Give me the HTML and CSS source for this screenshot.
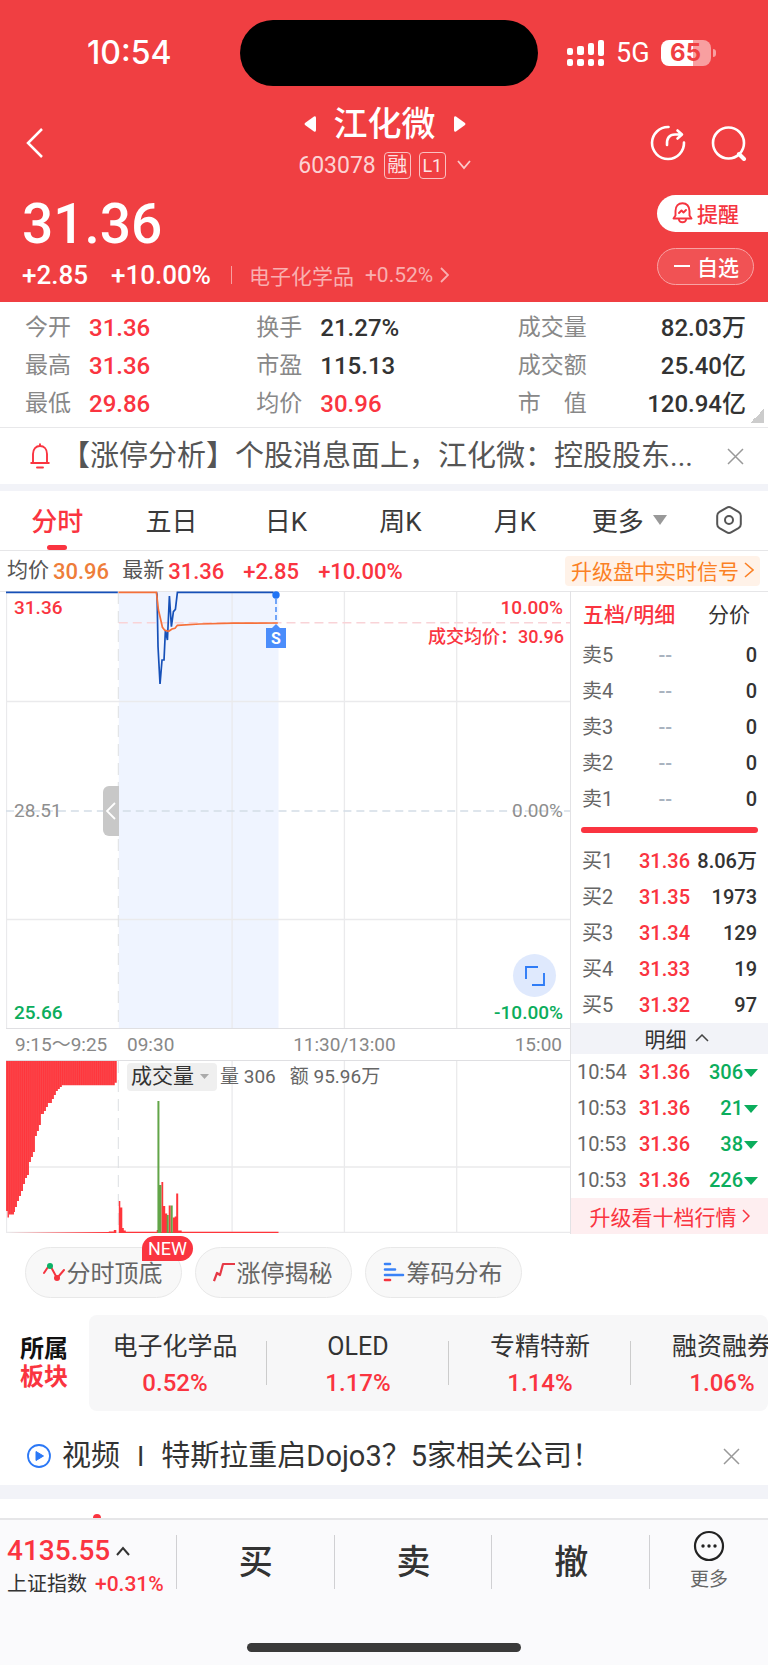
FILE: index.html
```html
<!DOCTYPE html>
<html lang="zh-CN">
<head>
<meta charset="utf-8">
<meta name="viewport" content="width=device-width, initial-scale=1">
<title>江化微 603078</title>
<link rel="stylesheet" href="styles.css">
</head>
<body>
<header class="hero">
  <div class="status">
    <span class="clock">10:54</span>
    <span class="island"></span>
    <div class="signals">
      <svg class="bars" width="38" height="26" viewBox="0 0 38 26" fill="#fff" aria-hidden="true">
        <rect x="0" y="8" width="6" height="7" rx="2"/><rect x="10" y="6" width="7" height="9" rx="2"/><rect x="21" y="3" width="6" height="12" rx="2"/><rect x="31" y="0" width="6" height="16" rx="2"/>
        <rect x="0" y="19" width="6" height="7" rx="2"/><rect x="10" y="19" width="7" height="7" rx="2"/><rect x="21" y="19" width="6" height="7" rx="2"/><rect x="31" y="19" width="6" height="7" rx="2"/>
      </svg>
      <span class="net">5G</span>
      <span class="battery">65</span>
      <span class="nub"></span>
    </div>
  </div>

  <div class="titlebar">
    <button class="icon-btn back" aria-label="返回"><svg width="20" height="32" viewBox="0 0 20 32" fill="none" stroke="#fff" stroke-width="2.5"><path d="M18 2 4 16l14 14"/></svg></button>
    <div class="title">
      <div class="title-row">
        <button class="icon-btn" aria-label="上一只"><svg width="12" height="18" viewBox="0 0 12 18" fill="#fff"><path d="M10 1.500Q12 .5 12 3v12q0 2.500-2 1.500L1 10q-1-1 0-2z"/></svg></button>
        <h1>江化微</h1>
        <button class="icon-btn" aria-label="下一只"><svg width="12" height="18" viewBox="0 0 12 18" fill="#fff"><path d="M2 1.500Q0 .5 0 3v12q0 2.500 2 1.500L11 10q1-1 0-2z"/></svg></button>
      </div>
      <div class="code-row">
        <span class="code">603078</span><span class="badge">融</span><span class="badge level">L1</span>
        <svg width="14" height="10" viewBox="0 0 14 10" fill="none" stroke="#fbc9ca" stroke-width="1.800"><path d="m1 1 6 7 6-7"/></svg>
      </div>
    </div>
    <div class="tools">
      <button class="icon-btn" aria-label="分享"><svg width="36" height="36" viewBox="0 0 36 36" fill="none" stroke="#fff" stroke-width="2.600" stroke-linecap="round" stroke-linejoin="round"><path d="M18.500 2A16 16 0 1 0 34 17.500"/><path d="M17 20c-.5-7 2.500-10.500 8-10.500h6M27.500 5.500l4.500 4-4.500 4"/></svg></button>
      <button class="icon-btn" aria-label="搜索"><svg width="36" height="36" viewBox="0 0 36 36" fill="none" stroke="#fff" stroke-width="2.600" stroke-linecap="round"><circle cx="17.500" cy="18" r="15.500"/><path d="m28 29 5 5" stroke-width="4"/></svg></button>
    </div>
  </div>

  <div class="quote">
    <div class="quote-main">
      <div class="price">31.36</div>
      <div class="change-row">
        <span class="change">+2.85</span><span class="change">+10.00%</span>
        <a class="industry" href="#industry">电子化学品<span>+0.52%</span>
          <svg width="9" height="16" viewBox="0 0 9 16" fill="none" stroke="currentColor" stroke-width="1.800"><path d="m1 1 7 7-7 7"/></svg></a>
      </div>
    </div>
    <div class="quote-actions">
      <button class="pill remind"><svg width="21" height="22" viewBox="0 0 21 22" fill="none" stroke="currentColor" stroke-width="1.900" stroke-linejoin="round" stroke-linecap="round"><path d="M1.500 16.500h18l-2-3V9c0-5-3-7.800-7-7.800S3.500 4 3.500 9v4.500zM7 18c1 3 6 3 7 0"/><path d="m7 11 2.500-2.500 2 2L14 8"/></svg>提醒</button>
      <button class="pill watch"><span class="minus"></span>自选</button>
    </div>
  </div>
</header>

<main>
  <section class="stats" aria-label="行情数据">
    <dl class="col">
      <div><dt>今开</dt><dd class="up">31.36</dd></div>
      <div><dt>最高</dt><dd class="up">31.36</dd></div>
      <div><dt>最低</dt><dd class="up">29.86</dd></div>
    </dl>
    <dl class="col mid">
      <div><dt>换手</dt><dd>21.27%</dd></div>
      <div><dt>市盈</dt><dd>115.13</dd></div>
      <div><dt>均价</dt><dd class="up">30.96</dd></div>
    </dl>
    <dl class="col last">
      <div><dt>成交量</dt><dd>82.03万</dd></div>
      <div><dt>成交额</dt><dd>25.40亿</dd></div>
      <div><dt>市　值</dt><dd>120.94亿</dd></div>
    </dl>
    <span class="corner"></span>
  </section>

  <section class="notice">
    <svg width="20" height="26" viewBox="0 0 20 26" fill="none" stroke="#fa3440" stroke-width="1.900" stroke-linecap="round" stroke-linejoin="round"><path d="M1.200 20h17.600M3 20v-9c0-5 3-8 7-8s7 3 7 8v9M10 3V1.200M7 24.500h6"/></svg>
    <p>【涨停分析】个股消息面上，江化微：控股股东...</p>
    <button class="icon-btn" aria-label="关闭"><svg width="17" height="17" viewBox="0 0 17 17" fill="none" stroke="#999" stroke-width="1.500"><path d="m1 1 15 15M16 1 1 16"/></svg></button>
  </section>

  <nav class="tabs">
    <button class="tab on">分时</button>
    <button class="tab">五日</button>
    <button class="tab">日K</button>
    <button class="tab">周K</button>
    <button class="tab">月K</button>
    <button class="tab more">更多<svg width="14" height="10" viewBox="0 0 14 10" fill="#999"><path d="M0 0h14L7 10z"/></svg></button>
    <button class="tab gear" aria-label="设置"><svg width="26" height="28" viewBox="0 0 26 28" fill="none" stroke="#555" stroke-width="2" stroke-linejoin="round"><path d="M10.500 1.800q2.500-1.400 5 0l7 4q2.300 1.400 2.300 4v8.400q0 2.600-2.300 4l-7 4q-2.500 1.400-5 0l-7-4q-2.300-1.400-2.300-4V9.800q0-2.600 2.300-4z"/><circle cx="13" cy="14" r="4"/></svg></button>
  </nav>

  <div class="info">
    <span class="k">均价</span><span class="v avg">30.96</span>
    <span class="k">最新</span><span class="v">31.36</span>
    <span class="v gap">+2.85</span><span class="v gap">+10.00%</span>
    <a class="upgrade" href="#signal">升级盘中实时信号<svg width="10" height="16" viewBox="0 0 10 16" fill="none" stroke="currentColor" stroke-width="1.600"><path d="m1 1 8 7-8 7"/></svg></a>
  </div>

  <div class="board">
    <div class="charts">
      <div class="plot price-plot">
        <svg class="canvas" viewBox="0 0 565 437" preserveAspectRatio="none" role="img" aria-label="分时走势">
          <rect x="113" y="1" width="160" height="436" fill="#eff4ff"/>
          <g stroke="#eaeaec" stroke-width="1.300"><path d="M.5 1v436M226.500 1v436M339 1v436M451.500 1v436M0 110.500h565M0 328.500h565"/></g>
          <path d="M112.500 1v436" stroke="#dcdfe2" stroke-dasharray="12 7"/>
          <path d="M0 220h565" stroke="#d3dde6" stroke-width="1.600" stroke-dasharray="8 5"/>
          <path d="M113 31.700h452" stroke="#f9d3d7" stroke-width="1.600" stroke-dasharray="9 5"/>
          <path d="M0 1.300h112M150.700 1.300l.6 2 1 52.400 2 37.300 2-24h2l1.400-30 2 10 2-44 2 30.700 2-15 2-2.400 2-17H268" fill="none" stroke="#1650b8" stroke-width="1.700"/>
          <path d="M112.700 1.300h38l2 17.700 1.600 6.700 2.400 10.600 2.300 3 4 1 3.300-2.300 3-.7 2.400-3 22.300-1.300 33.300-.8 45-.2" fill="none" stroke="#f5703a" stroke-width="1.700"/>
        </svg>
        <span class="lab tl up">31.36</span><span class="lab tr up">10.00%</span>
        <span class="lab deal up">成交均价：30.96</span>
        <span class="lab ml">28.51</span><span class="lab mr">0.00%</span>
        <span class="lab bl down">25.66</span><span class="lab br down">-10.00%</span>
        <span class="marker"><svg width="22" height="58" viewBox="0 0 22 58"><path d="M11 8v24" stroke="#2d7bf5" stroke-width="1.300" stroke-dasharray="5 3"/><circle cx="11" cy="4" r="3.700" fill="#2074f5"/><path d="M1 37h6l4-4 4 4h6v20H1z" fill="#4b8dfb"/><text x="11" y="53" text-anchor="middle" class="s-text">S</text></svg></span>
        <button class="handle" aria-label="收起竞价"><svg width="10" height="18" viewBox="0 0 10 18" fill="none" stroke="#fff" stroke-width="1.800"><path d="M9 1 1 9l8 8"/></svg></button>
        <button class="expand" aria-label="全屏"><svg width="20" height="20" viewBox="0 0 20 20" fill="none" stroke="#2f7cf6" stroke-width="1.900"><path d="M1 13V1h12M19 7v12H7"/></svg></button>
      </div>
      <div class="axis"><span class="pre">9:15～9:25</span><span>09:30</span><span class="noon">11:30/13:00</span><span class="end">15:00</span></div>
      <div class="plot vol-plot">
        <svg class="canvas" viewBox="0 0 565 172" preserveAspectRatio="none" role="img" aria-label="成交量">
          <defs><pattern id="stripe" width="1.900" height="8" patternUnits="userSpaceOnUse"><path d="M0 0h1.900v8H0z" fill="#ff353b"/><path d="M0 0h.5v8H0z" fill="#f6555c"/></pattern></defs>
          <g stroke="#eaeaec" stroke-width="1.300"><path d="M.5 0v172M226.500 0v172M339 0v172M451.500 0v172M0 106h565M0 171.500h565"/></g>
          <path d="M112.500 0v172" stroke="#dcdfe2" stroke-dasharray="12 7"/>
          <path fill="url(#stripe)" d="M0 0H111V21.700H109V24.300H56V26H54V28H52V30H50V34H48V38H46V42H42V46H40V50H38V53H35V64H33V70H31V75H29V91H27V96H25V101H23V114H21V117H19V123H17V130H15V135H13V140H11V146H9V151H8V153.500H3V156.500H1.500V150H0Z"/>
          <path fill="#ff353b" d="M2 172 103 171V170.500H108V169H110.500V172ZM113 140H114.500V146.500H116.500V167H118V169.500H120V170.700H151V169H153V170.700H273V172H113ZM155.700 121H157.500V145H159.500V152.500H161.500V172H155.700ZM163 144.500H165V172H163ZM167 156.500H169V155.500H170.500V132.500H172.500V169.500H176V172H167Z"/>
          <path fill="#62a548" d="M151.700 40H153.700V124H155.700V172H151.700ZM161 154H163V172H161ZM165 144.500H167V172H165Z"/>
        </svg>
        <div class="vol-head"><button class="vol-select">成交量<svg width="9" height="5" viewBox="0 0 9 5" fill="#aaa"><path d="M0 0h9L4.500 5z"/></svg></button><span>量 306</span><span class="amt">额 95.96万</span></div>
      </div>
    </div>

    <aside class="book">
      <div class="book-tabs"><button class="on">五档/明细</button><button>分价</button></div>
      <table class="levels">
        <tbody>
          <tr><th scope="row">卖5</th><td class="none">--</td><td>0</td></tr>
          <tr><th scope="row">卖4</th><td class="none">--</td><td>0</td></tr>
          <tr><th scope="row">卖3</th><td class="none">--</td><td>0</td></tr>
          <tr><th scope="row">卖2</th><td class="none">--</td><td>0</td></tr>
          <tr><th scope="row">卖1</th><td class="none">--</td><td>0</td></tr>
        </tbody>
      </table>
      <div class="ratio"></div>
      <table class="levels">
        <tbody>
          <tr><th scope="row">买1</th><td class="up">31.36</td><td>8.06万</td></tr>
          <tr><th scope="row">买2</th><td class="up">31.35</td><td>1973</td></tr>
          <tr><th scope="row">买3</th><td class="up">31.34</td><td>129</td></tr>
          <tr><th scope="row">买4</th><td class="up">31.33</td><td>19</td></tr>
          <tr><th scope="row">买5</th><td class="up">31.32</td><td>97</td></tr>
        </tbody>
      </table>
      <button class="detail">明细<svg width="14" height="8" viewBox="0 0 14 8" fill="none" stroke="#444" stroke-width="1.500"><path d="m1 7 6-6 6 6"/></svg></button>
      <table class="levels ticks">
        <tbody>
          <tr><th scope="row">10:54</th><td class="up">31.36</td><td class="down sold">306</td></tr>
          <tr><th scope="row">10:53</th><td class="up">31.36</td><td class="down sold">21</td></tr>
          <tr><th scope="row">10:53</th><td class="up">31.36</td><td class="down sold">38</td></tr>
          <tr><th scope="row">10:53</th><td class="up">31.36</td><td class="down sold">226</td></tr>
        </tbody>
      </table>
      <a class="ten" href="#level2">升级看十档行情<svg width="8" height="14" viewBox="0 0 8 14" fill="none" stroke="currentColor" stroke-width="1.500"><path d="m1 1 6 6-6 6"/></svg></a>
    </aside>
  </div>

  <div class="chips">
    <button class="chip"><svg width="22" height="20" viewBox="0 0 22 20" fill="none" stroke="#f5343f" stroke-width="2" stroke-linecap="round" stroke-linejoin="round"><path d="m1 11 4-6M8 5l6 11M15 15l6-7"/><circle cx="7" cy="4" r="3" fill="#0bb267" stroke="none"/><circle cx="14" cy="16" r="3" fill="#f5343f" stroke="none"/></svg>分时顶底<span class="new">NEW</span></button>
    <button class="chip"><svg width="22" height="20" viewBox="0 0 22 20" fill="none" stroke="#e63946" stroke-width="2.200" stroke-linejoin="round"><path d="M1 19l3-8 3 2L10 2h12"/></svg>涨停揭秘</button>
    <button class="chip"><svg width="22" height="20" viewBox="0 0 22 20" stroke-width="2.600" stroke-linecap="round"><path d="M2 2h5M2 7.500h10M2 13h18" stroke="#3a82f7"/><path d="M2 18h5" stroke="#f5343f"/></svg>筹码分布</button>
  </div>

  <section class="sectors">
    <h2>所属<em>板块</em></h2>
    <div class="sector-list">
      <a href="#s1">电子化学品<b>0.52%</b></a>
      <a href="#s2">OLED<b>1.17%</b></a>
      <a href="#s3">专精特新<b>1.14%</b></a>
      <a href="#s4">融资融券<b>1.06%</b></a>
    </div>
  </section>

  <section class="video">
    <svg width="26" height="26" viewBox="0 0 26 26"><circle cx="13" cy="13" r="11" fill="none" stroke="#2b78f6" stroke-width="1.800"/><path d="M10 8.500v9l7.500-4.500z" fill="#2b78f6" stroke="#2b78f6" stroke-linejoin="round"/></svg>
    <p>视频<i>I</i>特斯拉重启Dojo3？5家相关公司！</p>
    <button class="icon-btn" aria-label="关闭"><svg width="17" height="17" viewBox="0 0 17 17" fill="none" stroke="#999" stroke-width="1.500"><path d="m1 1 15 15M16 1 1 16"/></svg></button>
  </section>
  <div class="peek"><svg width="8" height="4" viewBox="0 0 8 4"><circle cx="4" cy="4" r="4" fill="#fa3440"/></svg></div>
</main>

<footer class="dock">
  <div class="dock-row">
    <a class="index" href="#index">
      <span class="index-top">4135.55<svg width="14" height="10" viewBox="0 0 14 10" fill="none" stroke="#333" stroke-width="2"><path d="m1 9 6-7 6 7"/></svg></span>
      <span class="index-sub">上证指数<b>+0.31%</b></span>
    </a>
    <button class="act">买</button>
    <button class="act">卖</button>
    <button class="act">撤</button>
    <button class="dock-more"><svg width="32" height="32" viewBox="0 0 32 32"><circle cx="16" cy="16" r="14" fill="none" stroke="#222" stroke-width="2.200"/><g fill="#222"><circle cx="10" cy="16" r="1.700"/><circle cx="16" cy="16" r="1.700"/><circle cx="22" cy="16" r="1.700"/></g></svg>更多</button>
  </div>
  <div class="home"></div>
</footer>
</body>
</html>
```
FILE: styles.css
```css
* { box-sizing: border-box; }
body {
  margin: 0;
  background: #fff;
  color: #333;
  font-family: Roboto, "Noto Sans CJK SC", sans-serif;
  font-size: 22px;
  overflow-x: hidden;
}
h1, h2, p, dl, dd { margin: 0; }
button {
  margin: 0;
  padding: 0;
  border: 0;
  background: none;
  color: inherit;
  font: inherit;
}
a { color: inherit; text-decoration: none; }
svg { display: block; flex: none; }
.up { color: #fa3440; }
.down { color: #0bad5c; }

/* header */
.hero { height: 302px; background: #f03f42; color: #fff; }
.status {
  display: grid;
  grid-template-columns: 1fr 298px 1fr;
  align-items: center;
  padding-top: 20px;
}
.clock {
  padding-left: 87px;
  font: 500 32px/34px Inter, sans-serif;
}
.island { width: 298px; height: 66px; margin-left: 5px; border-radius: 33px; background: #000; }
.signals { display: flex; align-items: center; padding-left: 34px; }
.net { margin: 0 11px 0 11px; font: 400 27px/32px Roboto, sans-serif; }
.battery {
  width: 50px;
  height: 26px;
  border-radius: 8px;
  background: linear-gradient(90deg, #fff 65%, #f89fa0 65%);
  color: #f03f42;
  font: 700 24px/26px Inter, sans-serif;
  text-align: center;
}
.nub { width: 3px; height: 8px; margin-left: 2px; border-radius: 0 4px 4px 0; background: #f89fa0; }
.titlebar {
  display: grid;
  grid-template-columns: 1fr auto 1fr;
  align-items: center;
  padding: 16px 21px 0 24px;
}
.title { padding-right: 2px; }
.title-row { display: flex; align-items: center; justify-content: center; gap: 18px; }
.title h1 { font-size: 34px; line-height: 44px; font-weight: 500; }
.code-row { display: flex; align-items: center; gap: 8px; height: 38px; }
.code { font-size: 23px; color: #fcd2d3; }
.badge {
  width: 27px;
  height: 27px;
  border: 1px solid #fac0c1;
  border-radius: 4px;
  font-size: 20px;
  line-height: 25px;
  text-align: center;
  color: #fde4e4;
}
.level { font-size: 18px; }
.code-row svg { margin-left: 3px; }
.tools { display: flex; justify-content: flex-end; gap: 25px; }
.quote { display: flex; justify-content: space-between; }
.quote-main { padding: 7px 0 0 22px; }
.price { font-size: 55px; line-height: 66px; font-weight: 500; }
.change-row { display: flex; align-items: center; gap: 23px; height: 36px; }
.change { font-size: 26px; font-weight: 500; }
.industry {
  display: flex;
  align-items: center;
  gap: 11px;
  margin-left: -3px;
  padding-left: 18px;
  background: linear-gradient(#f89fa0, #f89fa0) 0 50% / 1px 18px no-repeat;
  color: #f9afb0;
  font-size: 21px;
}
.industry svg { margin-left: -4px; }
.quote-actions { display: flex; flex-direction: column; gap: 16px; width: 111px; padding-top: 11px; }
.pill { display: flex; align-items: center; height: 37px; padding-bottom: 2px; font-size: 21px; font-weight: 500; }
.remind { gap: 4px; padding-left: 15px; border-radius: 19px 0 0 19px; background: #fff; color: #f5343f; }
.watch {
  gap: 7px;
  width: 97px;
  padding-left: 16px;
  border: 1px solid #f8a3a4;
  border-radius: 19px;
  background: #f15254;
}
.minus { width: 16px; height: 2px; background: #fff; }

/* key figures */
.stats { position: relative; display: flex; padding: 7px 22px 5px 25px; border-bottom: 1px solid #e8e8ea; }
.col { flex: 231 1 0; }
.mid { flex-grow: 261; }
.last { flex-grow: 228; }
.col div { display: flex; align-items: center; height: 37px; }
.col div + div { margin-top: 1px; }
.stats dt { width: 64px; font-size: 23px; line-height: 30px; color: #888; }
.stats dd { font-size: 24px; line-height: 32px; font-weight: 500; }
.last dt { width: 80px; }
.last dd { flex: 1; text-align: right; }
.corner {
  position: absolute;
  right: 4px;
  bottom: 4px;
  width: 14px;
  height: 14px;
  background: linear-gradient(135deg, transparent 50%, #ccc 50%);
}

.notice { display: flex; align-items: center; height: 56px; padding: 0 24px 0 30px; }
.notice p {
  flex: 1;
  min-width: 0;
  margin-left: 11px;
  overflow: hidden;
  white-space: nowrap;
  font-size: 29px;
  line-height: 42px;
  color: #555;
}

.tabs { display: flex; height: 67px; border-top: 7px solid #f2f3f8; border-bottom: 1px solid #e6e6e8; }
.tab {
  position: relative;
  display: flex;
  flex: 115 1 0;
  align-items: center;
  justify-content: center;
  padding-bottom: 2px;
  font-size: 26px;
  color: #3a3a3a;
}
.tab.on { color: #fa3440; font-weight: 500; }
.tab.on::after {
  content: "";
  position: absolute;
  bottom: 0;
  width: 20px;
  height: 5px;
  border-radius: 3px;
  background: #fa3440;
}
.more { gap: 9px; padding-right: 4px; }
.gear { flex-grow: 78; }

.info { display: flex; align-items: center; height: 41px; padding: 0 8px 0 7px; border-bottom: 1px solid #e6e6e8; }
.k { font-size: 21px; line-height: 30px; padding-bottom: 2px; color: #555; margin-right: 4px; }
.v { font-size: 22px; font-weight: 500; color: #fa3440; }
.avg { margin-right: 13px; color: #ee7d3a; }
.gap { margin-left: 19px; }
.upgrade {
  display: flex;
  align-items: center;
  gap: 5px;
  height: 30px;
  margin-left: auto;
  padding: 0 6px 2px;
  border-radius: 4px;
  background: #fff2e8;
  color: #fb8125;
  font-size: 21px;
}

/* charts */
.board { display: flex; margin-top: -1px; }
.charts { flex: 1; min-width: 0; padding-left: 6px; border-right: 1px solid #e2e2e5; }
.plot { position: relative; }
.canvas { width: 100%; height: 437px; }
.vol-plot .canvas { height: 172px; }
.lab { position: absolute; font-size: 19px; line-height: 24px; font-weight: 500; }
.tl { top: 5px; left: 8px; }
.tr { top: 5px; right: 7px; }
.deal { top: 34px; right: 6px; font-size: 18px; }
.ml { top: 208px; left: 8px; color: #8e8e8e; font-weight: 400; }
.mr { top: 208px; right: 7px; color: #8e8e8e; font-weight: 400; }
.bl { bottom: 3px; left: 8px; }
.br { bottom: 3px; right: 7px; }
.marker { position: absolute; top: 0; left: 46%; }
.s-text { fill: #fff; font: 700 16px Roboto, sans-serif; }
.handle {
  position: absolute;
  top: 195px;
  left: 97px;
  display: flex;
  align-items: center;
  justify-content: center;
  width: 16px;
  height: 50px;
  border-radius: 6px 0 0 6px;
  background: #c8c8c8;
}
.expand {
  position: absolute;
  right: 14px;
  bottom: 31px;
  display: flex;
  align-items: center;
  justify-content: center;
  width: 43px;
  height: 43px;
  border-radius: 50%;
  background: #dfe9fd;
}
.axis {
  position: relative;
  display: flex;
  align-items: center;
  height: 33px;
  padding: 0 8px 0 9px;
  border: 1px solid #dfdfe2;
  border-width: 1px 0;
  font-size: 19px;
  line-height: 28px;
  color: #888;
}
.pre { width: 112px; }
.noon { position: absolute; left: 60%; transform: translateX(-50%); }
.end { margin-left: auto; }
.vol-head {
  position: absolute;
  top: 2px;
  left: 121px;
  display: flex;
  align-items: center;
  gap: 3px;
  font-size: 19px;
  line-height: 26px;
  color: #666;
}
.vol-select {
  display: flex;
  align-items: center;
  gap: 6px;
  height: 28px;
  padding: 0 8px 2px 4px;
  border-radius: 4px;
  background: #efefef;
  color: #333;
  font-size: 21px;
}
.amt { margin-left: 11px; }

/* order book */
.book { width: 197px; padding-top: 1px; }
.book-tabs { display: flex; align-items: center; height: 45px; padding: 0 18px 4px 12px; justify-content: space-between; font-size: 21px; }
.book-tabs .on { color: #fa3440; font-weight: 500; }
.levels { width: 100%; border-collapse: collapse; table-layout: fixed; font-size: 20px; line-height: 24px; }
.levels tr { height: 36px; }
.levels th, .levels td { padding: 0; text-align: right; font-weight: 500; }
.levels th { width: 60px; padding-left: 11px; text-align: left; font-weight: 400; color: #666; }
.levels td:nth-child(2) { width: 59px; }
.levels td:last-child { padding-right: 11px; }
.levels td.none { padding-right: 18px; color: #a9b3bf; }
.ticks th { padding-left: 6px; }
.levels td.sold:last-child { padding-right: 10px; }
.sold::after {
  content: "";
  display: inline-block;
  margin-left: 1px;
  vertical-align: 2px;
  border: 7px solid transparent;
  border-top: 8px solid #0bad5c;
  border-bottom: 0;
}
.ratio { height: 6px; margin: 10px 10px; border-radius: 3px; background: #fa3440; }
.detail {
  display: flex;
  align-items: center;
  justify-content: center;
  gap: 8px;
  width: 100%;
  height: 31px;
  padding: 0 0 2px 14px;
  background: #f2f3f8;
  font-size: 21px;
}
.ten {
  display: flex;
  align-items: center;
  justify-content: center;
  gap: 5px;
  height: 36px;
  background: #feeef0;
  color: #fa3440;
  font-size: 21px;
}

/* shortcuts */
.chips { display: flex; gap: 13px; padding: 13px 25px 17px; }
.chip {
  position: relative;
  display: flex;
  align-items: center;
  justify-content: center;
  gap: 2px;
  width: 157px;
  height: 51px;
  padding: 0 2px 2px 0;
  border: 1px solid #e8e8e8;
  border-radius: 26px;
  background: #f8f8f8;
  color: #666;
  font-size: 24px;
}
.new {
  position: absolute;
  top: -12px;
  right: -12px;
  width: 51px;
  height: 25px;
  border-radius: 13px 13px 13px 0;
  background: #fa3440;
  color: #fff;
  font-size: 18px;
  line-height: 26px;
}
.sectors { display: flex; align-items: center; }
.sectors h2 { flex: none; width: 89px; padding-left: 20px; font-size: 24px; line-height: 28px; font-weight: 700; color: #111; }
.sectors em { display: block; font-style: normal; color: #fa3440; }
.sector-list { display: flex; flex: 1; min-width: 0; height: 96px; overflow: hidden; border-radius: 8px; background: #f7f7f8; }
.sector-list a {
  display: flex;
  flex: 0 0 182px;
  flex-direction: column;
  align-items: center;
  justify-content: center;
  padding-top: 4px;
  background: linear-gradient(#ccc, #ccc) 100% 50% / 1px 44px no-repeat;
  font-size: 25px;
  line-height: 36px;
}
.sector-list a:first-child { flex-basis: 178px; padding-right: 6px; }
.sector-list b { font-size: 24px; font-weight: 500; color: #fa3440; }

.video { display: flex; align-items: center; height: 74px; padding: 16px 28px 0 26px; }
.video p { flex: 1; min-width: 0; margin-left: 10px; font-size: 29px; line-height: 42px; white-space: nowrap; }
.video i { margin: 0 17px; font-size: 27px; font-style: normal; }
.peek { height: 33px; padding: 16px 0 0 93px; border-top: 14px solid #f2f3f8; }
.peek svg { margin-top: -1px; }

/* bottom bar */
.dock { border-top: 2px solid #e6e6e8; background: #fafafc; height: 149px; }
.dock-row { display: flex; height: 86px; }
.index { flex: none; width: 177px; padding: 12px 0 0 7px; }
.index-top { display: flex; align-items: center; gap: 6px; font-size: 28px; line-height: 38px; font-weight: 500; color: #fa3440; }
.index-sub { display: flex; align-items: center; gap: 8px; font-size: 20px; line-height: 28px; }
.index-sub b { font-size: 21px; font-weight: 500; color: #fa3440; }
.act, .index, .dock-more { background: linear-gradient(#d0d0d3, #d0d0d3) 100% 15px / 1px 54px no-repeat; }
.act { flex: 158 1 0; padding-bottom: 7px; font-size: 34px; font-weight: 500; }
.dock-more {
  flex: 118 1 0;
  display: flex;
  flex-direction: column;
  align-items: center;
  gap: 4px;
  padding-top: 10px;
  background: none;
  font-size: 19px;
  line-height: 28px;
  color: #666;
}
.home { width: 274px; height: 9px; margin: 37px auto 0; border-radius: 5px; background: #3a3a3a; }
```
